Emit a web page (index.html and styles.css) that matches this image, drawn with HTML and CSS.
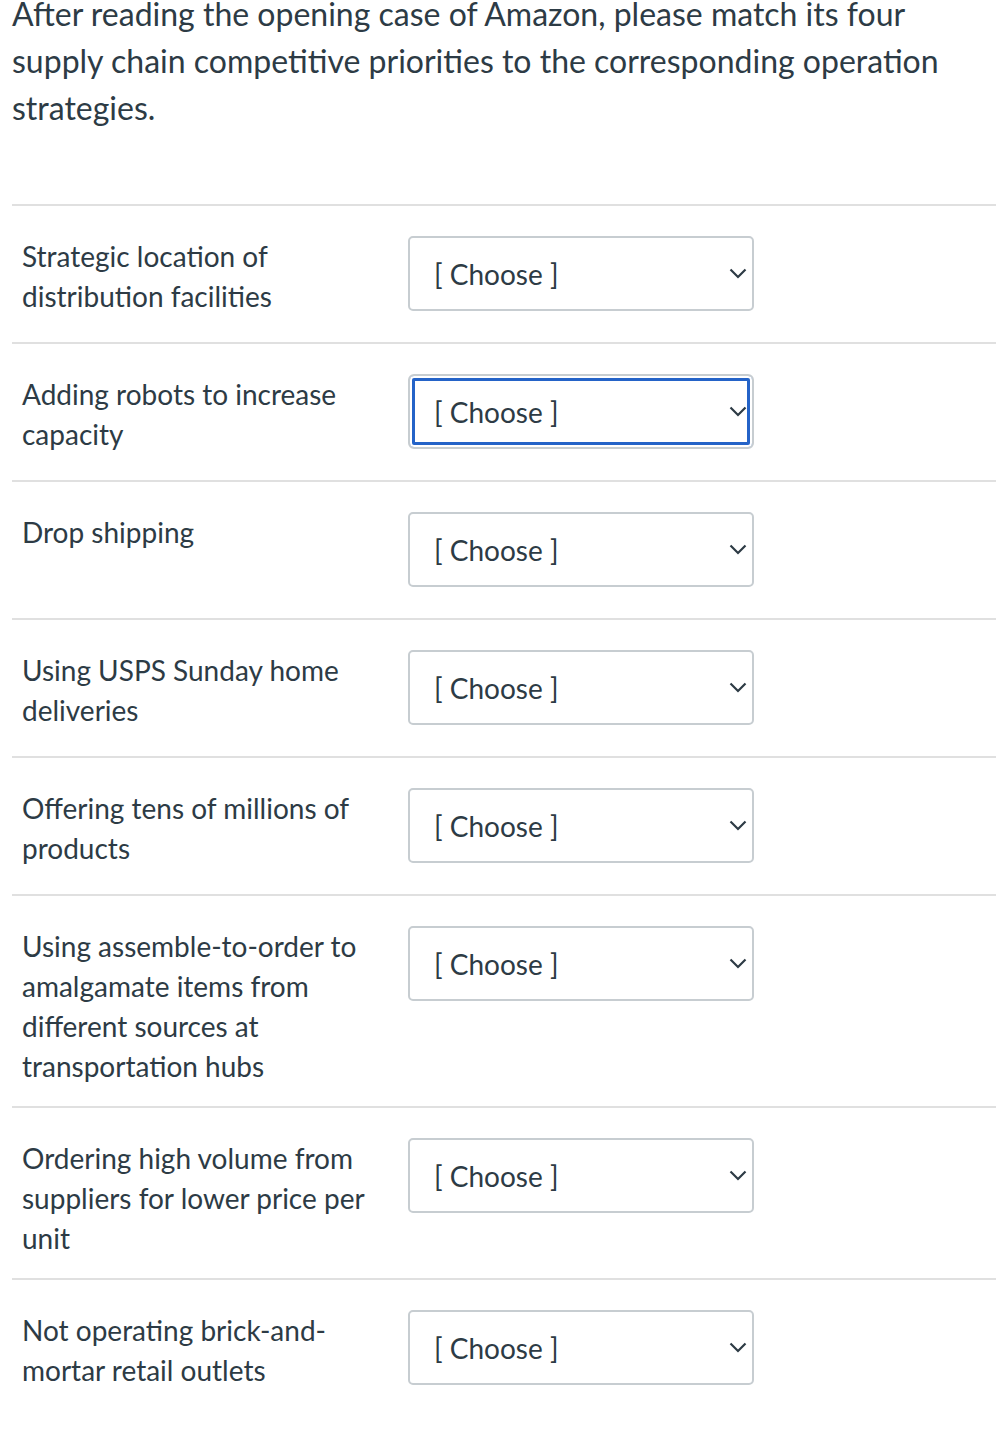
FILE: index.html
```html
<!DOCTYPE html>
<html lang="en">
<head>
<meta charset="utf-8">
<title>Matching question</title>
<link rel="stylesheet" href="styles.css">
</head>
<body>
<div class="question">
  <p class="prompt">After reading the opening case of Amazon, please match its four supply chain competitive priorities to the corresponding operation strategies.</p>
  <div class="answers">
    <div class="row">
      <div class="label">Strategic location of distribution facilities</div>
      <div class="select-wrap"><select class="select"><option>[ Choose ]</option></select><svg class="chev" viewBox="0 0 18 11" width="18" height="11"><path d="M1.5 1.5 L9 9 L16.5 1.5" fill="none" stroke="#2d3b45" stroke-width="2.2"/></svg></div>
    </div>
    <div class="row">
      <div class="label">Adding robots to increase capacity</div>
      <div class="select-wrap"><select class="select focused"><option>[ Choose ]</option></select><svg class="chev" viewBox="0 0 18 11" width="18" height="11"><path d="M1.5 1.5 L9 9 L16.5 1.5" fill="none" stroke="#2d3b45" stroke-width="2.2"/></svg></div>
    </div>
    <div class="row">
      <div class="label">Drop shipping</div>
      <div class="select-wrap"><select class="select"><option>[ Choose ]</option></select><svg class="chev" viewBox="0 0 18 11" width="18" height="11"><path d="M1.5 1.5 L9 9 L16.5 1.5" fill="none" stroke="#2d3b45" stroke-width="2.2"/></svg></div>
    </div>
    <div class="row">
      <div class="label">Using USPS Sunday home deliveries</div>
      <div class="select-wrap"><select class="select"><option>[ Choose ]</option></select><svg class="chev" viewBox="0 0 18 11" width="18" height="11"><path d="M1.5 1.5 L9 9 L16.5 1.5" fill="none" stroke="#2d3b45" stroke-width="2.2"/></svg></div>
    </div>
    <div class="row">
      <div class="label">Offering tens of millions of products</div>
      <div class="select-wrap"><select class="select"><option>[ Choose ]</option></select><svg class="chev" viewBox="0 0 18 11" width="18" height="11"><path d="M1.5 1.5 L9 9 L16.5 1.5" fill="none" stroke="#2d3b45" stroke-width="2.2"/></svg></div>
    </div>
    <div class="row">
      <div class="label">Using assemble-to-order to amalgamate items from different sources at transportation hubs</div>
      <div class="select-wrap"><select class="select"><option>[ Choose ]</option></select><svg class="chev" viewBox="0 0 18 11" width="18" height="11"><path d="M1.5 1.5 L9 9 L16.5 1.5" fill="none" stroke="#2d3b45" stroke-width="2.2"/></svg></div>
    </div>
    <div class="row">
      <div class="label">Ordering high volume from suppliers for lower price per unit</div>
      <div class="select-wrap"><select class="select"><option>[ Choose ]</option></select><svg class="chev" viewBox="0 0 18 11" width="18" height="11"><path d="M1.5 1.5 L9 9 L16.5 1.5" fill="none" stroke="#2d3b45" stroke-width="2.2"/></svg></div>
    </div>
    <div class="row last">
      <div class="label">Not operating brick-and-mortar retail outlets</div>
      <div class="select-wrap"><select class="select"><option>[ Choose ]</option></select><svg class="chev" viewBox="0 0 18 11" width="18" height="11"><path d="M1.5 1.5 L9 9 L16.5 1.5" fill="none" stroke="#2d3b45" stroke-width="2.2"/></svg></div>
    </div>
  </div>
</div>
</body>
</html>
```

FILE: styles.css
```css
html, body {
  margin: 0;
  padding: 0;
  background: #ffffff;
}

body {
  font-family: Lato, "Open Sans", "Liberation Sans", sans-serif;
  color: #2d3b45;
}

.question {
  padding: 0 8px 0 12px;
}

.prompt {
  margin: -10px 0 0 0;
  font-size: 32px;
  line-height: 47px;
}

.answers {
  margin-top: 73px;
}

.row {
  display: flex;
  align-items: flex-start;
  border-top: 2px solid #e0e0e0;
  padding: 30px 0 20px 10px;
}

.row.last {
  padding-bottom: 40px;
}

.label {
  width: 386px;
  flex: none;
  font-size: 28px;
  line-height: 40px;
  padding-right: 20px;
  box-sizing: border-box;
}

.select-wrap {
  position: relative;
  width: 346px;
  height: 75px;
  margin-bottom: 11px;
}

.select {
  -webkit-appearance: none;
  appearance: none;
  width: 346px;
  height: 75px;
  box-sizing: border-box;
  border: 2px solid #c7cdd1;
  border-radius: 5px;
  background: #ffffff;
  font-family: Lato, "Open Sans", "Liberation Sans", sans-serif;
  font-size: 28px;
  color: #2d3b45;
  padding: 0 40px 0 24px;
  margin: 0;
  outline: none;
}

.select.focused {
  box-shadow: inset 0 0 0 2px #ffffff, inset 0 0 0 5px #2463c8;
  border-radius: 6px;
}

.chev {
  position: absolute;
  right: 7px;
  top: 32px;
  pointer-events: none;
}
```
